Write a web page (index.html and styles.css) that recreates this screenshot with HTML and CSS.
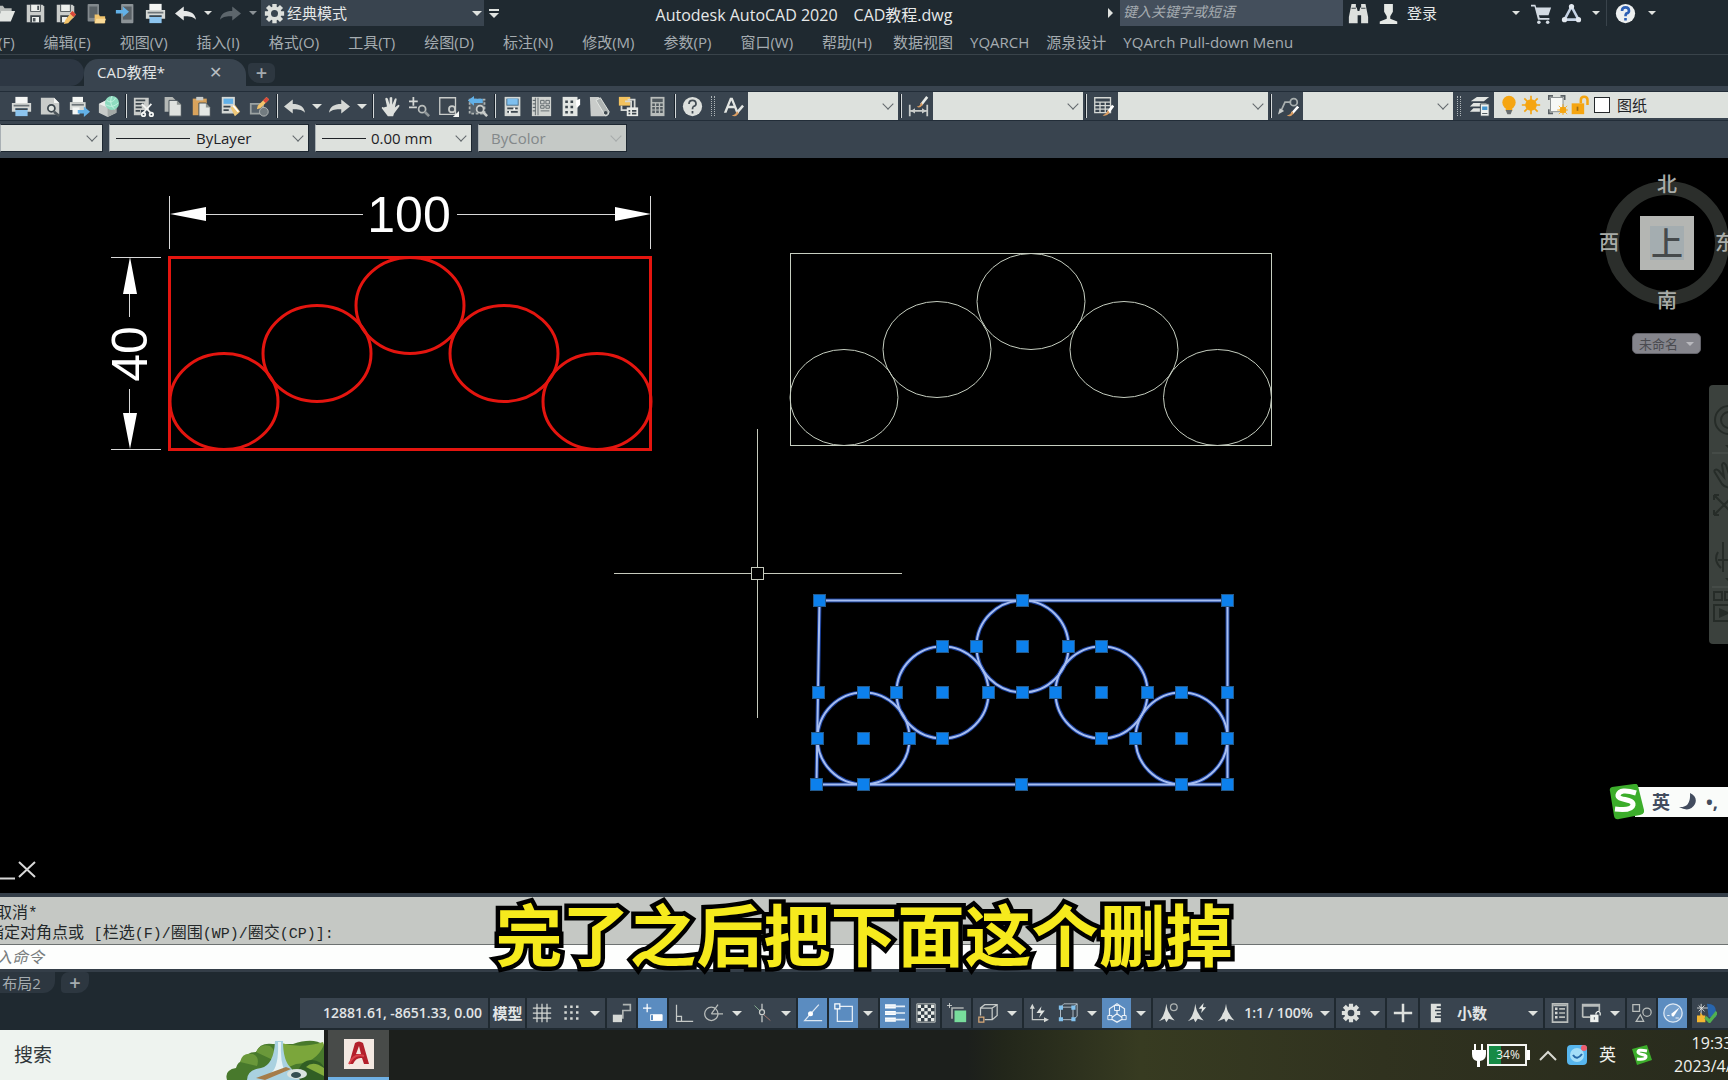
FILE: index.html
```html
<!DOCTYPE html>
<html lang="zh-CN">
<head>
<meta charset="utf-8">
<title>Autodesk AutoCAD 2020 - CAD教程.dwg</title>
<link rel="stylesheet" href="styles.css">
</head>
<body>
<svg class="sprite" aria-hidden="true">
  <symbol id="folder" viewBox="0 0 24 24"><path d="M1 3h8l2 3h8v3H7L3 20H1z" fill="#b9bdbb"/><path d="M7 9h16l-5 12H2z" fill="#e3e6e3"/></symbol>
  <symbol id="save" viewBox="0 0 24 24"><path d="M2 2h18l2 2v18H2z" fill="#c9ccca"/><path d="M6 2h12v8H6zM6 14h12v8H6z" fill="#3b4348"/><path d="M7 2h10v7H7zM8 16h8v6H8z" fill="#edf0ed"/><path d="M14 3h2v5h-2zM9 17h3v4H9z" fill="#4b5358"/></symbol>
  <symbol id="saveas" viewBox="0 0 24 24"><path d="M2 2h18l2 2v12l-8 6H2z" fill="#c9ccca"/><path d="M6 2h12v8H6zM6 14h10v8H6z" fill="#3b4348"/><path d="M7 2h10v7H7zM8 16h6v6H8z" fill="#edf0ed"/><path d="M20 9l4 4-9 10-5 1 2-5z" fill="#f3c36a"/><path d="M20 9l4 4-3 3-4-4z" fill="#d9483b"/></symbol>
  <symbol id="openweb" viewBox="0 0 24 24"><rect x="3" y="1" width="13" height="20" rx="1" fill="#82898d"/><path d="M5 4h9v13H5z" fill="#596166"/><path d="M11 13h5l1 2h6v8H11z" fill="#f0c36c"/><path d="M13 18h11l-2 5H11z" fill="#fadb97"/></symbol>
  <symbol id="saveweb" viewBox="0 0 24 24"><rect x="7" y="1" width="14" height="22" rx="1" fill="#8c9397"/><path d="M9 4h10v15H9z" fill="#596166"/><path d="M1 8h8V4l7 6-7 6v-4H1z" fill="#62b1e8"/></symbol>
  <symbol id="print" viewBox="0 0 24 24"><path d="M5 1h14v7H5z" fill="#f4f6f4"/><path d="M1 8h22v10H1z" fill="#d5d8d5"/><path d="M3 10h18v2H3z" fill="#6c7478"/><path d="M5 14h14v9H5z" fill="#8cc4ee"/><path d="M5 14h14v2H5z" fill="#3c464d"/></symbol>
  <symbol id="preview" viewBox="0 0 24 24"><path d="M1 2h15l6 6v13H1z" fill="#c9ccca"/><path d="M16 2v6h6z" fill="#f4f6f4"/><circle cx="13" cy="14" r="4" fill="#dfe3df" stroke="#3c464d" stroke-width="2"/><path d="M16 18l6 5" stroke="#4c555b" stroke-width="3"/></symbol>
  <symbol id="publish" viewBox="0 0 24 24"><path d="M4 1h12v6H4z" fill="#f4f6f4"/><path d="M1 7h18v9H1z" fill="#d5d8d5"/><path d="M3 9h14v2H3z" fill="#6c7478"/><path d="M4 13h8v8H4z" fill="#f4f6f4"/><path d="M10 16h7v-4l7 6-7 6v-4h-7z" fill="#62b1e8"/></symbol>
  <symbol id="dwf" viewBox="0 0 24 24"><path d="M1 9l10-5 10 5v10l-10 5-10-5z" fill="#c7cac8"/><path d="M11 13l10-4v10l-10 5z" fill="#a3a8a6"/><path d="M1 9l10-5 6 3-6 6z" fill="#eceeec"/><circle cx="16" cy="8" r="8" fill="#8edcc0"/><path d="M10 5c5 4 9 0 10-3M9 10c5 3 10 2 14-2M16 0c-3 6-1 12 3 15" fill="none" stroke="#c8f3e4"/></symbol>
  <symbol id="cut" viewBox="0 0 24 24"><path d="M1 2h17v14H9v6H1z" fill="#c9ccca"/><path d="M3 5h11M3 9h9M3 13h7M3 17h5" stroke="#3c464d" stroke-width="2"/><path d="M10 9l11 11M21 9L11 20" stroke="#f4f6f4" stroke-width="2"/><circle cx="12" cy="21" r="2" fill="none" stroke="#f4f6f4" stroke-width="2"/><circle cx="21" cy="21" r="2" fill="none" stroke="#f4f6f4" stroke-width="2"/></symbol>
  <symbol id="copy" viewBox="0 0 24 24"><path d="M3 1h9l4 4v13H3z" fill="#b4b8b6"/><path d="M8 5h9l5 5v13H8z" fill="#dfe2df" stroke="#3c464d"/><path d="M17 5v5h5z" fill="#8e9492"/></symbol>
  <symbol id="paste" viewBox="0 0 24 24"><path d="M2 3h16v19H2z" fill="#d9a35c"/><path d="M6 1h8v4H6z" fill="#c9ccca"/><path d="M9 8h8l5 5v10H9z" fill="#e5e8e5" stroke="#3c464d"/><path d="M17 8v5h5z" fill="#8e9492"/></symbol>
  <symbol id="match" viewBox="0 0 24 24"><path d="M2 1h15v19H2z" fill="#d5d8d5"/><path d="M4 3h11v6H4z" fill="#62b1e8"/><path d="M4 12h8M4 16h6" stroke="#3c464d" stroke-width="2"/><path d="M12 13l5-3 6 8-6 5z" fill="#f0c878"/><path d="M15 11l6 7" stroke="#fff" stroke-width="2"/></symbol>
  <symbol id="block" viewBox="0 0 24 24"><path d="M2 9h14v11H2z" fill="#56616a" stroke="#9ba2a2" stroke-width="2"/><circle cx="17" cy="18" r="5" fill="#727b80" stroke="#b8bcba"/><path d="M20 1l3 3-10 10-4 1 1-4z" fill="#f3c36a"/><path d="M20 1l3 3-4 4-3-3z" fill="#d9483b"/></symbol>
  <symbol id="undo" viewBox="0 0 24 24"><path d="M0 12L10 4v5c8 0 13 3 14 10-4-4-8-4-14-4v5z" fill="currentColor"/></symbol>
  <symbol id="redo" viewBox="0 0 24 24"><path d="M24 12L14 4v5C6 9 1 12 0 19c4-4 8-4 14-4v5z" fill="currentColor"/></symbol>
  <symbol id="hand" viewBox="0 0 24 24"><path d="M8 12L6 3q1-2 3 0l2 7V2q2-2 3 0v8l3-7q2-1 2 1l-2 9 4-3q2 0 1 2l-6 8-1 3H9l-7-9q0-2 2-1z" fill="#dde0dd"/></symbol>
  <symbol id="zoompm" viewBox="0 0 24 24"><path d="M5 1v10M0 6h10M0 13h9" stroke="#d5d8d5" stroke-width="2"/><circle cx="15" cy="15" r="4" fill="none" stroke="#b9bdbb" stroke-width="2"/><path d="M18 18l5 5" stroke="#909799" stroke-width="3"/></symbol>
  <symbol id="zoomwin" viewBox="0 0 24 24"><path d="M2 2h18v19H2z" fill="#3c4650" stroke="#c9ccca" stroke-width="1.5"/><circle cx="16" cy="15" r="3.500" fill="#48525b" stroke="#c9ccca" stroke-width="2"/><path d="M24 17v7h-7z" fill="#f4f6f4"/></symbol>
  <symbol id="zoomprev" viewBox="0 0 24 24"><path d="M3 4h17v16H3z" fill="#59636b" stroke="#aeb3b2" stroke-dasharray="3 2" stroke-width="2"/><path d="M1 5l7-5v3h10v5H8v3z" fill="#62b1e8"/><circle cx="15" cy="15" r="4" fill="#414b54" stroke="#c9ccca" stroke-width="2"/><path d="M18 18l5 5" stroke="#c9ccca" stroke-width="3"/></symbol>
  <symbol id="props" viewBox="0 0 24 24"><path d="M3 1h18v22H3z" fill="#d5d8d5"/><path d="M5 3h14v8H5z" fill="#3c6482"/><path d="M6 3h12v7H6z" fill="#7ebfee"/><path d="M6 14h12M6 18h12" stroke="#3c464d" stroke-width="2"/><path d="M14 13v3M9 17v3" stroke="#fff" stroke-width="2"/></symbol>
  <symbol id="design" viewBox="0 0 24 24"><path d="M1 1h22v22H1z" fill="#cfd2cf"/><path d="M5 2v20M8 2v20" stroke="#5a6468"/><path d="M2 5h3M2 9h3M2 13h3M2 17h3" stroke="#3c464d"/><path d="M11 5h4v4h-4zM17 5h4v4h-4zM11 11h4v3h-4zM17 11h4v3h-4zM11 17h10" fill="none" stroke="#5a6468"/></symbol>
  <symbol id="palettes" viewBox="0 0 24 24"><path d="M3 1h17v22H3z" fill="#e2e5e2"/><path d="M6 5h3v3H6zM12 5h3v3h-3zM6 11h3v3H6zM12 11h3v3h-3zM6 17h3v3H6zM12 17h3v3h-3z" fill="#3c464d"/><path d="M18 5l5-2v7l-4 4z" fill="#fff"/></symbol>
  <symbol id="sheets" viewBox="0 0 24 24"><path d="M1 1h10l12 18-5 4H2z" fill="#c9ccca"/><path d="M8 5l5-3 10 16q0 4-4 5L8 5" fill="#aeb3b2" stroke="#e8ebe8"/><circle cx="19" cy="19" r="2" fill="#3c464d"/></symbol>
  <symbol id="markup" viewBox="0 0 24 24"><path d="M1 1h13v10H1z" fill="#f2c25e"/><path d="M8 6h7v10H4v-5" fill="none" stroke="#d5d8d5" stroke-width="2"/><path d="M11 4h8v11" fill="none" stroke="#d5d8d5" stroke-width="2"/><path d="M10 13h13v10H10z" fill="#e8ebe8"/><path d="M12 17h2M16 17h5M12 20h2M16 20h5" stroke="#3c464d" stroke-width="2"/></symbol>
  <symbol id="calc" viewBox="0 0 24 24"><path d="M4 1h16v22H4z" fill="#b9bdbb"/><path d="M6 3h12v4H6z" fill="#4f585e"/><path d="M6 10h12M6 14h12M6 18h12" stroke="#4f585e" stroke-width="3" stroke-dasharray="3 1.500"/></symbol>
  <symbol id="help" viewBox="0 0 24 24"><circle cx="12" cy="12" r="11" fill="#dde0dd"/><path d="M8 9q0-4 4-4t4 4q0 2-3 3-1 1-1 3M12 17v3" fill="none" stroke="#434c54" stroke-width="2"/></symbol>
  <symbol id="bluehelp" viewBox="0 0 24 24"><circle cx="12" cy="12" r="11" fill="#edf0f0"/><path d="M8 9q0-4 4-4t4 4q0 2-3 3-1 1-1 3M12 17v3" fill="none" stroke="#2c5fb4" stroke-width="3"/></symbol>
  <symbol id="textstyle" viewBox="0 0 24 24"><path d="M1 19L8 2h3l7 17h-3l-2-5H6l-2 5zM7 11h5L9.500 5z" fill="#e2e5e2"/><path d="M23 11l-7 8" stroke="#e2e5e2" stroke-width="3"/><path d="M16 17l2 3q-4 5-8 2 4 0 6-5" fill="#d99c61"/></symbol>
  <symbol id="dimstyle" viewBox="0 0 24 24"><path d="M2 10v13M22 10v13M3 17h18" stroke="#c9ccca" stroke-width="2"/><path d="M3 17l5-3v6zM21 17l-5-3v6z" fill="#c9ccca"/><path d="M22 1l-7 9" stroke="#e8ebe8" stroke-width="3"/><path d="M15 7l2 3q-4 5-7 2 4 0 5-5" fill="#d99c61"/></symbol>
  <symbol id="tablestyle" viewBox="0 0 24 24"><path d="M2 2h18v17H2zM2 7h18M2 11h18M2 15h18M8 7v12M14 7v12" fill="none" stroke="#d5d8d5" stroke-width="1.500"/><path d="M23 11l-6 8" stroke="#fff" stroke-width="3"/><path d="M17 16l2 3q-4 5-8 3 4-1 6-6" fill="#d99c61"/></symbol>
  <symbol id="leader" viewBox="0 0 24 24"><path d="M3 18L8 7h7" fill="none" stroke="#a9afaf" stroke-width="2"/><path d="M0 21l2-7 5 3z" fill="#c9ccca"/><circle cx="18" cy="7" r="4" fill="none" stroke="#a9afaf" stroke-width="2"/><path d="M23 12l-7 8" stroke="#fff" stroke-width="3"/><path d="M16 17l2 3q-4 5-8 2 4 0 6-5" fill="#d99c61"/></symbol>
  <symbol id="layers" viewBox="0 0 24 24"><path d="M2 6l7-5h14l-6 5zM1 12l4-4h15v4zM1 18l4-4h12v4z" fill="#e2e5e2"/><path d="M13 9h10v14H13z" fill="#eef1ee" stroke="#3c464d"/><path d="M15 12h6v4h-6z" fill="#4596cf"/><path d="M15 20h6" stroke="#3c464d"/></symbol>
  <symbol id="bulb" viewBox="0 0 24 24"><circle cx="12" cy="9" r="8" fill="#f5a511"/><path d="M8 14h8v5H8z" fill="#f5a511"/><path d="M8 18h8l-2 5h-4z" fill="#686d6e"/></symbol>
  <symbol id="sun" viewBox="0 0 24 24"><circle cx="12" cy="12" r="7" fill="#f5a511"/><path d="M12 1v22M1 12h22M4 4l16 16M20 4L4 20" stroke="#f5a511" stroke-width="2"/></symbol>
  <symbol id="vpfreeze" viewBox="0 0 24 24"><path d="M3 3h15v17H3z" fill="#f6f8f6" stroke="#777e80"/><path d="M1 6V1h5M15 1h5v5M1 17v5h5" fill="none" stroke="#596064" stroke-width="2"/><circle cx="18" cy="18" r="4" fill="#f5a511"/><path d="M18 11v13M11 18h13M13 13l10 10M23 13L13 23" stroke="#f5a511"/></symbol>
  <symbol id="unlock" viewBox="0 0 24 24"><path d="M2 10h15v13H2z" fill="#f5a511"/><path d="M13 10V6q0-4 4-4t4 4v6" fill="none" stroke="#f5a511" stroke-width="3"/><path d="M9 14v5" stroke="#9c6a14" stroke-width="2"/></symbol>
  <symbol id="gear" viewBox="0 0 24 24"><g stroke="#dde0dd" stroke-width="5"><path d="M12 1v22M1 12h22M4 4l16 16M20 4L4 20"/></g><circle cx="12" cy="12" r="8" fill="#dde0dd"/><circle cx="12" cy="12" r="4" fill="#39444f"/></symbol>
  <symbol id="binoc" viewBox="0 0 24 24"><path d="M4 1h5v4h1l1 4h2l1-4h1V1h5l3 15v7h-8v-9h-4v9H1v-7z" fill="#dde0dd"/><path d="M4 6h5M15 6h5" stroke="#283239"/></symbol>
  <symbol id="user" viewBox="0 0 24 24"><path d="M7 1h10v9l-3 5v3l8 3v3H2v-3l8-3v-3l-3-5z" fill="#e5e8e5"/></symbol>
  <symbol id="cart" viewBox="0 0 24 24"><path d="M0 2h5l1 3h17l-3 9H9l1 3h11v2H8L4 4H0z" fill="#d3dbe3"/><circle cx="9" cy="22" r="2" fill="#d3dbe3"/><circle cx="19" cy="22" r="2" fill="#d3dbe3"/></symbol>
  <symbol id="a360" viewBox="0 0 24 24"><path d="M12 4L4 19h16z" fill="none" stroke="#c5d2e4" stroke-width="3"/><circle cx="12" cy="4" r="3" fill="#e2e8ef"/><circle cx="4" cy="19" r="3" fill="#e2e8ef"/><circle cx="20" cy="19" r="3" fill="#e2e8ef"/></symbol>
  <symbol id="grid" viewBox="0 0 24 24"><path d="M6 1v22M12 1v22M18 1v22M1 6h22M1 12h22M1 18h22" stroke="#d5d8d5" stroke-width="1.500"/></symbol>
  <symbol id="snap" viewBox="0 0 24 24"><path d="M4 3h3v3H4zM11 3h3v3h-3zM18 3h3v3h-3zM4 10h3v3H4zM11 10h3v3h-3zM18 10h3v3h-3zM4 17h3v3H4zM11 17h3v3h-3zM18 17h3v3h-3z" fill="#d5d8d5"/></symbol>
  <symbol id="infer" viewBox="0 0 24 24"><path d="M1 14h11v9H1z" fill="#d5d8d5"/><path d="M13 2h9v7h-9v10" fill="none" stroke="#aeb3b2" stroke-width="2"/></symbol>
  <symbol id="dyn" viewBox="0 0 24 24"><path d="M5 1v10M0 6h10" stroke="#fff" stroke-width="1.500"/><path d="M9 14h14v7H9z" fill="none" stroke="#fff"/><path d="M12 14h11v7H12z" fill="#fff"/></symbol>
  <symbol id="ortho" viewBox="0 0 24 24"><path d="M3 2v20h20M3 16h6v6" fill="none" stroke="#c5c9c7" stroke-width="1.500"/></symbol>
  <symbol id="polar" viewBox="0 0 24 24"><circle cx="10" cy="13" r="8" fill="none" stroke="#b9bdbb" stroke-width="1.500"/><path d="M10 13L18 2M10 13h14" fill="none" stroke="#b9bdbb" stroke-width="1.500"/></symbol>
  <symbol id="iso" viewBox="0 0 24 24"><path d="M3 3l7 7" stroke="#8fbc96"/><path d="M14 14l8 7" stroke="#b88274"/><path d="M12 1v7M12 15v8" stroke="#c9ccca" stroke-width="1.500"/><circle cx="12" cy="11" r="3" fill="none" stroke="#c9ccca" stroke-width="1.500"/></symbol>
  <symbol id="otrack" viewBox="0 0 24 24"><path d="M19 2L2 21h21" fill="none" stroke="#dce7f2" stroke-width="1.500"/><circle cx="9" cy="13" r="3" fill="#fff"/></symbol>
  <symbol id="osnap" viewBox="0 0 24 24"><path d="M4 4h18v18H4z" fill="none" stroke="#e8eff6" stroke-width="1.500"/><path d="M1 1h6v6H1z" fill="#5b8cc0" stroke="#fff" stroke-width="1.500"/></symbol>
  <symbol id="lwt" viewBox="0 0 24 24"><path d="M0 4h13M0 12h13M0 20h13" stroke="#fff" stroke-width="5"/><path d="M0 4h24M0 12h24M0 20h24" stroke="#e5edf5" stroke-width="2"/></symbol>
  <symbol id="transp" viewBox="0 0 24 24"><path d="M1 1h22v22H1z" fill="#333e47" stroke="#d5d8d5"/><path d="M2 4h20M2 12h20M2 20h20" stroke="#e8ebe8" stroke-width="4" stroke-dasharray="4"/><path d="M6 8h16M6 16h16" stroke="#e8ebe8" stroke-width="4" stroke-dasharray="4"/></symbol>
  <symbol id="cycle" viewBox="0 0 24 24"><path d="M3 0v6M0 3h6" stroke="#d5d8d5"/><path d="M6 19V6h14" fill="none" stroke="#aeb3b2" stroke-width="2"/><path d="M9 9h14v14H9z" fill="#78dd9c"/></symbol>
  <symbol id="osnap3d" viewBox="0 0 24 24"><path d="M3 15V6h14v14H8M3 6l5-4h15v13l-6 5M17 6l6-4" fill="none" stroke="#c5c9c7" stroke-width="1.500"/><path d="M1 17h6v6H1z" fill="#39444f" stroke="#d9a978" stroke-width="1.500"/></symbol>
  <symbol id="ducs" viewBox="0 0 24 24"><path d="M4 4v16h17" fill="none" stroke="#c5c9c7" stroke-width="1.500"/><path d="M1 7l3-6 3 6zM18 17l6 3-6 3z" fill="#d5d8d5"/><path d="M15 4l-6 8h5l-2 6 7-9h-5z" fill="#e2e5e2"/></symbol>
  <symbol id="filter" viewBox="0 0 24 24"><path d="M3 5h15v15H3zM3 5l4-4h16v15l-5 4M18 5l5-4" fill="none" stroke="#c5d0d8"/><path d="M1 3h5v5H1zM16 3h5v5h-5zM1 17h5v5H1zM16 17h5v5h-5z" fill="#82c1ee"/></symbol>
  <symbol id="gizmo" viewBox="0 0 24 24"><path d="M12 1l9 6v11l-9 5-9-5V7zM12 5v8M12 13l-7 5M12 13l7 5" fill="none" stroke="#e8eff6" stroke-width="1.500"/><path d="M9 3h6v6H9zM1 15h5v5H1zM18 15h5v5h-5z" fill="#5b8cc0" stroke="#fff"/></symbol>
  <symbol id="annovis" viewBox="0 0 24 24"><path d="M10 1q1 8 4 12 2 4 6 8l-7-2-3 4-2-4-7 3q5-5 6-9 2-4 3-12z" fill="#dde0dd"/><circle cx="19" cy="5" r="4" fill="#39444f" stroke="#aeb3b2" stroke-width="1.500"/></symbol>
  <symbol id="annoauto" viewBox="0 0 24 24"><path d="M10 1q1 8 4 12 2 4 6 8l-7-2-3 4-2-4-7 3q5-5 6-9 2-4 3-12z" fill="#dde0dd"/><path d="M20 0l-6 7h4l-1 5 6-7h-4z" fill="#e8ebe8"/></symbol>
  <symbol id="anno" viewBox="0 0 24 24"><path d="M12 1q1 8 4 12 2 4 6 8l-7-2-3 4-2-4-8 3q5-5 6-9 3-4 4-12z" fill="#dde0dd"/></symbol>
  <symbol id="plus" viewBox="0 0 24 24"><path d="M12 1v22M1 12h22" stroke="#dde0dd" stroke-width="3"/></symbol>
  <symbol id="ruler" viewBox="0 0 24 24"><path d="M7 1h12v3h-5v2h5v2h-7v2h7v2h-5v2h5v2h-7v2h7v5H7z" fill="#dde0dd"/></symbol>
  <symbol id="quick" viewBox="0 0 24 24"><path d="M3 1h18v22H3z" fill="none" stroke="#b9bdbb" stroke-width="2"/><path d="M6 7h3M6 12h3M6 17h3" stroke="#d5d8d5" stroke-width="3"/><path d="M11 7h7M11 12h7M11 17h7M4 3h16" stroke="#b9bdbb" stroke-width="2"/></symbol>
  <symbol id="lockui" viewBox="0 0 24 24"><path d="M2 17V2h20v8M2 17h9" fill="none" stroke="#b9bdbb" stroke-width="2"/><path d="M2 3h20" stroke="#b9bdbb" stroke-width="3"/><path d="M11 14h10v9H11z" fill="#eef1ee"/><path d="M18 14v-2q3-4 5 0v3" fill="none" stroke="#eef1ee" stroke-width="1.500"/><path d="M16 17v3" stroke="#39444f"/></symbol>
  <symbol id="isolate" viewBox="0 0 24 24"><path d="M1 2h8v8H1zM5 22h9l-4-8z" fill="none" stroke="#b9bdbb" stroke-width="1.500"/><circle cx="18" cy="11" r="5" fill="none" stroke="#b9bdbb" stroke-width="1.500"/></symbol>
  <symbol id="perf" viewBox="0 0 24 24"><circle cx="12" cy="12" r="11" fill="#75a0cd" stroke="#dfe9f3" stroke-width="1.500"/><path d="M10 13L20 5l-7 11q-3 1-3-3z" fill="#fff"/><path d="M5 15h3M15 18h4" stroke="#fff"/></symbol>
  <symbol id="standards" viewBox="0 0 24 24"><path d="M12 1q11 0 11 10v6h-9z" fill="#2865ad"/><path d="M5 1v12M0 6h13M2 3l7 7M9 3l-7 7" stroke="#e8ebe8"/><path d="M0 15h4v-4l3 4h3v8H0z" fill="#f3b631"/><path d="M10 17l5 5 9-11" fill="none" stroke="#51b150" stroke-width="4"/></symbol>
</svg>

<header class="titlebar">
  <div class="quick">
    <button aria-label="打开"><svg><use href="#folder"/></svg></button>
    <button aria-label="保存"><svg><use href="#save"/></svg></button>
    <button aria-label="另存为"><svg><use href="#saveas"/></svg></button>
    <button aria-label="从 Web 打开"><svg><use href="#openweb"/></svg></button>
    <button aria-label="保存到 Web"><svg><use href="#saveweb"/></svg></button>
    <button aria-label="打印"><svg><use href="#print"/></svg></button>
    <button aria-label="放弃"><svg><use href="#undo"/></svg></button>
    <button class="drop" aria-label="放弃列表"></button>
    <button class="dim" aria-label="重做"><svg><use href="#redo"/></svg></button>
    <button class="drop dim" aria-label="重做列表"></button>
  </div>
  <div class="workspace">
    <svg><use href="#gear"/></svg>
    <select aria-label="工作空间"><option>经典模式</option></select>
  </div>
  <button class="custom" aria-label="自定义快速访问工具栏"></button>
  <h1><span>Autodesk AutoCAD 2020</span><span>CAD教程.dwg</span></h1>
  <div class="infocenter">
    <button class="expand" aria-label="展开搜索"></button>
    <input type="search" placeholder="键入关键字或短语" aria-label="搜索帮助">
    <button aria-label="查找"><svg><use href="#binoc"/></svg></button>
    <button class="login"><svg><use href="#user"/></svg>登录</button>
    <button class="drop account" aria-label="登录选项"></button>
    <button aria-label="应用商店"><svg><use href="#cart"/></svg></button>
    <button aria-label="连接"><svg><use href="#a360"/></svg></button>
    <button class="drop narrow" aria-label="连接选项"></button>
    <button class="ruled" aria-label="帮助"><svg><use href="#bluehelp"/></svg></button>
    <button class="drop" aria-label="帮助选项"></button>
  </div>
</header>

<nav class="menubar">
  <a href="#">(F)</a><a href="#">编辑(E)</a><a href="#">视图(V)</a><a href="#">插入(I)</a><a href="#">格式(O)</a><a href="#">工具(T)</a><a href="#">绘图(D)</a><a href="#">标注(N)</a><a href="#">修改(M)</a><a href="#">参数(P)</a><a href="#">窗口(W)</a><a href="#">帮助(H)</a>
  <div class="plugins"><a href="#">数据视图</a><a href="#">YQARCH</a><a href="#">源泉设计</a><a href="#">YQArch Pull-down Menu</a></div>
</nav>

<div class="filetabs">
  <button class="tab start" aria-label="开始"></button>
  <div class="tab active"><span>CAD教程*</span><button aria-label="关闭">✕</button></div>
  <button class="tab new" aria-label="新图形">+</button>
</div>

<div class="toolbars">
  <div class="toolbar">
    <button aria-label="打印"><svg><use href="#print"/></svg></button>
    <button aria-label="打印预览"><svg><use href="#preview"/></svg></button>
    <button aria-label="发布"><svg><use href="#publish"/></svg></button>
    <button aria-label="三维 DWF"><svg><use href="#dwf"/></svg></button>
    <i class="sep"></i>
    <button aria-label="剪切"><svg><use href="#cut"/></svg></button>
    <button aria-label="复制"><svg><use href="#copy"/></svg></button>
    <button aria-label="粘贴"><svg><use href="#paste"/></svg></button>
    <button aria-label="特性匹配"><svg><use href="#match"/></svg></button>
    <button aria-label="块编辑器"><svg><use href="#block"/></svg></button>
    <i class="sep"></i>
    <button aria-label="放弃"><svg><use href="#undo"/></svg></button>
    <button class="drop" aria-label="放弃列表"></button>
    <button aria-label="重做"><svg><use href="#redo"/></svg></button>
    <button class="drop" aria-label="重做列表"></button>
    <i class="sep"></i>
    <button aria-label="平移"><svg><use href="#hand"/></svg></button>
    <button aria-label="实时缩放"><svg><use href="#zoompm"/></svg></button>
    <button aria-label="窗口缩放"><svg><use href="#zoomwin"/></svg></button>
    <button aria-label="缩放上一个"><svg><use href="#zoomprev"/></svg></button>
    <i class="sep"></i>
    <button aria-label="特性"><svg><use href="#props"/></svg></button>
    <button aria-label="设计中心"><svg><use href="#design"/></svg></button>
    <button aria-label="工具选项板"><svg><use href="#palettes"/></svg></button>
    <button aria-label="图纸集管理器"><svg><use href="#sheets"/></svg></button>
    <button aria-label="标记集管理器"><svg><use href="#markup"/></svg></button>
    <button aria-label="快速计算器"><svg><use href="#calc"/></svg></button>
    <i class="sep"></i>
    <button aria-label="帮助"><svg><use href="#help"/></svg></button>
    <i class="grip"></i>
    <button aria-label="文字样式"><svg><use href="#textstyle"/></svg></button>
    <div class="combo style"><select aria-label="文字样式控制"><option></option></select></div>
    <i class="sep"></i>
    <button aria-label="标注样式"><svg><use href="#dimstyle"/></svg></button>
    <div class="combo style"><select aria-label="标注样式控制"><option></option></select></div>
    <i class="sep"></i>
    <button aria-label="表格样式"><svg><use href="#tablestyle"/></svg></button>
    <div class="combo style"><select aria-label="表格样式控制"><option></option></select></div>
    <i class="sep"></i>
    <button aria-label="多重引线样式"><svg><use href="#leader"/></svg></button>
    <div class="combo style"><select aria-label="引线样式控制"><option></option></select></div>
    <i class="grip"></i>
    <button aria-label="图层特性管理器"><svg><use href="#layers"/></svg></button>
    <div class="layer">
      <svg><use href="#bulb"/></svg><svg><use href="#sun"/></svg><svg class="wide"><use href="#vpfreeze"/></svg><svg><use href="#unlock"/></svg><i class="swatch"></i>
      <select aria-label="图层"><option>图纸</option></select>
    </div>
  </div>
  <div class="properties">
    <div class="combo color"><select aria-label="颜色"><option></option></select></div>
    <div class="combo linetype"><select aria-label="线型"><option>ByLayer</option></select></div>
    <div class="combo lineweight"><select aria-label="线宽"><option>0.00 mm</option></select></div>
    <div class="combo plotstyle"><select aria-label="打印样式" disabled><option>ByColor</option></select></div>
  </div>
</div>

<main class="canvas">
  <svg class="drawing" role="img" aria-label="图形">
    <defs>
      <rect id="handle" class="handle" x="-6" y="-6" width="12" height="12"/>
      <g id="handles"><use href="#handle"/><use href="#handle" x="-46"/><use href="#handle" x="46"/><use href="#handle" y="-46"/><use href="#handle" y="46"/></g>
    </defs>
    <g transform="translate(0 -158)">
      <g class="dimension">
        <path d="M169.500 196v53M650.500 196v53M206 214.500h157M457 214.500h158M111 257.500h50M111 449.500h50M129.500 293v24M129.500 389v24"/>
        <path class="solid" d="M170 214l36-7v14zM651 214l-36-7v14zM130 257l-7 37h14zM130 449l-7-36h14z"/>
        <text x="409" y="232">100</text>
        <text transform="translate(147 354) rotate(-90)">40</text>
      </g>
      <g class="red">
        <rect x="169.500" y="257.500" width="481" height="192"/>
        <ellipse cx="224" cy="401.500" rx="54" ry="48"/><ellipse cx="317" cy="353.500" rx="54" ry="48"/><ellipse cx="410" cy="305.500" rx="54" ry="48"/><ellipse cx="504" cy="353.500" rx="54" ry="48"/><ellipse cx="597" cy="401.500" rx="54" ry="48"/>
      </g>
      <g class="plain">
        <rect x="790.5" y="253.5" width="481" height="192"/>
        <ellipse cx="844" cy="397.500" rx="54" ry="48"/><ellipse cx="937" cy="349.500" rx="54" ry="48"/><ellipse cx="1031" cy="301.500" rx="54" ry="48"/><ellipse cx="1124" cy="349.500" rx="54" ry="48"/><ellipse cx="1217.500" cy="397.500" rx="54" ry="48"/>
      </g>
      <g class="cursor"><path d="M757.5 429v138M757.5 579v139M614 573.5h138M763 573.5h139"/><rect x="751.5" y="567.5" width="12" height="12"/></g>
      <g>
        <g class="glow"><path d="M819.500 600.500H1227.500V784.500H816.500z"/><circle cx="863.500" cy="738.500" r="46"/><circle cx="942.500" cy="692.500" r="46"/><circle cx="1022.500" cy="646.500" r="46"/><circle cx="1101.500" cy="692.500" r="46"/><circle cx="1181.500" cy="738.500" r="46"/></g>
        <g class="picked"><path d="M819.500 600.500H1227.500V784.500H816.500z"/><circle cx="863.500" cy="738.500" r="46"/><circle cx="942.500" cy="692.500" r="46"/><circle cx="1022.500" cy="646.500" r="46"/><circle cx="1101.500" cy="692.500" r="46"/><circle cx="1181.500" cy="738.500" r="46"/></g>
        <use href="#handles" x="863.500" y="738.500"/><use href="#handles" x="942.500" y="692.500"/><use href="#handles" x="1022.500" y="646.500"/><use href="#handles" x="1101.500" y="692.500"/><use href="#handles" x="1181.500" y="738.500"/>
        <use href="#handle" x="819.500" y="600.500"/><use href="#handle" x="1227.500" y="600.500"/><use href="#handle" x="818.500" y="692.500"/><use href="#handle" x="1227.500" y="692.500"/><use href="#handle" x="816.500" y="784.500"/><use href="#handle" x="1021.500" y="784.500"/><use href="#handle" x="1227.500" y="784.500"/>
      </g>
      <g class="ucs"><path d="M0 878.500h15M19 862l16 15M35 862L19 877"/></g>
    </g>
  </svg>
  <div class="viewcube">
    <span class="north">北</span><span class="west">西</span><button>上</button><span class="east">东</span><span class="south">南</span>
  </div>
  <button class="ucsname">未命名</button>
  <div class="navbar">
    <svg viewBox="0 0 40 259"><g fill="none" stroke="#262c28" stroke-width="2"><circle cx="20" cy="35" r="14"/><circle cx="20" cy="35" r="8"/><path d="M5 86l8 13q5 6 14 2M5 86q2-3 5 0l5 6-2-12q1-4 4 0l3 9V76q3-2 4 0v12M5 110l20 20M5 130l20-20M5 110v5M5 110h5M5 130v-5M5 130h5M12 183q-8-8-3-16M9 175h18M14 157v30M5 207h8v8H5zM16 207h8v8h-8zM5 220h22v16H5z"/></g><path d="M10 223l11 5-11 5zM16 60h6l-3 3zM16 193h6l-3 3z" fill="#262c28"/><path d="M3 68h37M3 202h37" stroke="#505752"/></svg>
  </div>
  <div class="ime">
    <svg viewBox="0 0 36 36"><path d="M2 7q-1-3 2-4L26 0q3-1 4 2l6 24q1 4-4 5L11 35q-4 1-5-3z" fill="#3cad2b"/><path d="M28 9q-16-5-18 2c-1 6 16 3 15 10q-1 6-18 4" fill="none" stroke="#fff" stroke-width="5"/></svg>
    <span>英</span>
    <svg class="moon" viewBox="0 0 20 20"><path d="M12 1q8 4 5 11-5 9-16 3 12 1 11-14" fill="#424c5e"/></svg>
    <span class="punct">•,</span>
  </div>
</main>

<section class="command">
  <div class="history">
    <p class="cancel">取消*</p>
    <p class="prompt">指定对角点或 <span>[</span>栏选<span>(F)/</span>圈围<span>(WP)/</span>圈交<span>(CP)]:</span></p>
  </div>
  <input type="text" placeholder="入命令" aria-label="命令行">
  <div class="subtitle">完了之后把下面这个删掉</div>
</section>

<div class="layouts">
  <button class="layout">布局2</button>
  <button class="layout add" aria-label="新建布局">+</button>
</div>

<footer class="status">
  <div class="group coords">12881.61, -8651.33, 0.00</div>
  <div class="group"><button class="model">模型</button></div>
  <div class="group"><button aria-label="栅格"><svg><use href="#grid"/></svg></button><button aria-label="捕捉"><svg><use href="#snap"/></svg></button><button class="drop" aria-label="捕捉设置"></button></div>
  <div class="group"><button aria-label="推断约束"><svg><use href="#infer"/></svg></button></div>
  <div class="group"><button class="on" aria-label="动态输入"><svg><use href="#dyn"/></svg></button></div>
  <div class="group"><button aria-label="正交"><svg><use href="#ortho"/></svg></button><button aria-label="极轴追踪"><svg><use href="#polar"/></svg></button><button class="drop" aria-label="极轴设置"></button><button aria-label="等轴测草图"><svg><use href="#iso"/></svg></button><button class="drop" aria-label="等轴测设置"></button></div>
  <div class="group"><button class="on" aria-label="对象捕捉追踪"><svg><use href="#otrack"/></svg></button></div>
  <div class="group"><button class="on" aria-label="对象捕捉"><svg><use href="#osnap"/></svg></button><button class="drop" aria-label="对象捕捉设置"></button></div>
  <div class="group"><button class="on" aria-label="线宽"><svg><use href="#lwt"/></svg></button></div>
  <div class="group"><button aria-label="透明度"><svg><use href="#transp"/></svg></button></div>
  <div class="group"><button aria-label="选择循环"><svg><use href="#cycle"/></svg></button></div>
  <div class="group"><button aria-label="三维对象捕捉"><svg><use href="#osnap3d"/></svg></button><button class="drop" aria-label="三维对象捕捉设置"></button></div>
  <div class="group"><button aria-label="动态 UCS"><svg><use href="#ducs"/></svg></button><button aria-label="选择过滤"><svg><use href="#filter"/></svg></button><button class="drop" aria-label="过滤设置"></button><button class="on" aria-label="小控件"><svg><use href="#gizmo"/></svg></button><button class="drop" aria-label="小控件设置"></button></div>
  <div class="group"><button aria-label="注释可见性"><svg><use href="#annovis"/></svg></button><button aria-label="自动缩放"><svg><use href="#annoauto"/></svg></button><button aria-label="注释比例"><svg><use href="#anno"/></svg></button><button class="scale">1:1 / 100%</button></div>
  <div class="group"><button aria-label="切换工作空间"><svg><use href="#gear"/></svg></button><button class="drop" aria-label="工作空间列表"></button></div>
  <div class="group monitor"><button aria-label="注释监视器"><svg><use href="#plus"/></svg></button></div>
  <div class="group units"><svg><use href="#ruler"/></svg><select aria-label="单位"><option>小数</option></select></div>
  <div class="group"><button aria-label="快捷特性"><svg><use href="#quick"/></svg></button></div>
  <div class="group"><button aria-label="锁定用户界面"><svg><use href="#lockui"/></svg></button><button class="drop" aria-label="锁定列表"></button></div>
  <div class="group"><button aria-label="隔离对象"><svg><use href="#isolate"/></svg></button></div>
  <div class="group"><button class="on" aria-label="图形性能"><svg><use href="#perf"/></svg></button></div>
  <div class="group last"><button aria-label="图形标准"><svg><use href="#standards"/></svg></button></div>
</footer>

<div class="taskbar">
  <div class="search">
    <input type="text" placeholder="搜索" aria-label="搜索">
    <svg viewBox="0 0 99 40">
      <path d="M2 40q-3-10 9-12 2-8 9-7 0-9 11-9 4-10 17-8h20q20-7 31 1v35z" fill="#48792c"/>
      <path d="M56 3q20 6 42-1l1 3q-8 18-28 19l-12 5z" fill="#7ba63b"/><path d="M15 22q2-10 13-8 7 3 4 12M31 12q4-9 14-6 7 5 3 14" fill="#6a983a"/>
      <path d="M73 32q3-12 14-12 9 1 12 7v13H74z" fill="#315e24"/><path d="M81 27q7-7 18 1v8z" fill="#83ac3c"/>
      <path d="M50 1h8q0 20 8 27l9 12H22q0-10 14-12 13-3 14-27z" fill="#a9d1e0"/><path d="M53 2h3q-1 20 4 30l-14 1q8-6 7-31z" fill="#e7f3f5"/>
      <path d="M31 38l30-11 5 2-26 11z" fill="#a57c49"/><ellipse cx="72" cy="34" rx="10" ry="5" fill="#d9e3df"/><ellipse cx="71" cy="35" rx="5" ry="3" fill="#354f50"/>
    </svg>
  </div>
  <button class="app" aria-label="AutoCAD 2020"><svg viewBox="0 0 30 30"><path d="M0 0h30v30H0z" fill="#f3e8e1"/><path d="M5 25L11 4q4-3 8 0l6 21h-5l-2-6q-6-1-9 6z" fill="#b3202b"/><path d="M12 15l3-8 2 8z" fill="#f3e8e1"/><path d="M5 25q5-11 15-8" fill="none" stroke="#d9434a" stroke-width="2"/></svg></button>
  <div class="tray">
    <svg class="power" viewBox="0 0 60 27"><path d="M4 2h2v6h5V2h2v6h3v4q0 6-6 7v6H7v-6q-5-1-5-7V8h2z" fill="#fff"/><rect x="18" y="3" width="38" height="20" fill="none" stroke="#f4f5f2" stroke-width="2"/><path d="M19 4h12v18H19z" fill="#168a45"/><path d="M57 8h3v10h-3z" fill="#fff"/><text x="38" y="17">34%</text></svg>
    <svg class="chev" viewBox="0 0 18 12"><path d="M1 11l8-8 8 8" fill="none" stroke="#d9dad2" stroke-width="2"/></svg>
    <svg class="chat" viewBox="0 0 20 20"><rect width="20" height="20" rx="4" fill="#57b6ee"/><circle cx="10" cy="10" r="7" fill="#a4def7"/><path d="M6 10q4 6 9-1" fill="none" stroke="#2568a7" stroke-width="2"/><circle cx="17" cy="3" r="3" fill="#ef5d6c"/></svg>
    <span class="lang">英</span>
    <svg class="sogou" viewBox="0 0 20 20"><path d="M0 4l15-4 5 15-15 5z" fill="#3cad2b"/><path d="M15 6Q6 4 6 7c0 3 9 2 8 5q-1 3-9 2" fill="none" stroke="#fff" stroke-width="3"/></svg>
    <div class="clock"><span>19:33</span><span>2023/4/11</span></div>
  </div>
</div>
</body>
</html>
```
FILE: styles.css
```css
*, *::before, *::after { box-sizing: border-box; }

body {
  margin: 0;
  height: 100vh;
  display: flex;
  flex-direction: column;
  overflow: hidden;
  background: #1f2930;
  color: #c9cdcf;
  font: 15px/20px "Open Sans", "Noto Sans CJK SC", sans-serif;
}

button, select, input {
  font: inherit;
  color: inherit;
  border: 0;
  border-radius: 0;
  margin: 0;
  padding: 0;
  background: none;
}

select { appearance: none; }
a { color: inherit; text-decoration: none; }
svg { display: block; flex: none; }
.sprite { position: absolute; width: 0; height: 0; }

/* small filled arrow used by every split button */
.drop { display: flex; align-items: center; justify-content: center; }
.drop::after,
.workspace::after,
.scale::after,
.units::after {
  content: "";
  border: 5px solid transparent;
  border-top-color: #dfe2df;
  border-bottom: 0;
}
.dim { color: #5d666c; }
.drop.dim::after { border-top-color: #8b9296; }

/* title bar */
.titlebar { display: flex; height: 30px; flex: none; color: #e6e8e8; }
.titlebar svg { width: 21px; height: 21px; }
.titlebar button { display: flex; flex: none; align-items: center; justify-content: center; width: 30px; height: 26px; }
.titlebar .drop { width: 15px; }
.titlebar .drop::after { border-width: 4px; border-bottom: 0; }
.quick { display: flex; flex: none; width: 270px; margin-left: -10px; }
.quick .dim { color: #5d666c; }
.workspace { display: flex; flex: none; align-items: center; gap: 2px; width: 223px; height: 26px; margin-left: 1px; padding: 0 2px 0 3px; background: #39444f; }
.workspace select { flex: 1; }
.titlebar .custom { width: 20px; flex-direction: column; gap: 2px; }
.custom::before { content: ""; width: 10px; height: 2px; background: #dfe2df; }
.custom::after { content: ""; border: 5px solid transparent; border-top-color: #dfe2df; border-bottom: 0; }
.titlebar h1 { display: flex; gap: 16px; flex: 1; justify-content: center; margin: 0; padding: 5px 0 0 4px; font-size: 16px; font-weight: 400; white-space: nowrap; }
.infocenter { display: flex; flex: none; width: 628px; }
.titlebar .expand { width: 20px; }
.expand::after { content: ""; border: 5px solid transparent; border-left-color: #dfe2df; border-right: 0; }
.infocenter input { flex: none; width: 223px; height: 26px; padding: 0 3px 4px; background: #444f5c; font-style: italic; font-size: 14px; }
.infocenter input::placeholder { color: #a4abb0; }
.titlebar .login { width: 132px; gap: 8px; justify-content: flex-start; padding-left: 5px; }
.titlebar .account { width: 21px; }
.titlebar .narrow { width: 20px; }
.titlebar .ruled { width: 38px; border-left: 1px solid #39434b; }

/* menus */
.menubar { display: flex; gap: 29px; height: 25px; flex: none; padding-top: 2px; margin-left: -2px; border-bottom: 1px solid #39434a; color: #a5acb0; white-space: nowrap; }
.plugins { display: flex; gap: 17px; margin-left: -8px; }

/* drawing tabs */
.filetabs { display: flex; align-items: flex-end; height: 31px; flex: none; }
.tab { height: 27px; background: #39444f; color: #e2e5e6; }
.tab.start { width: 84px; height: 27px; background: #2d3743; border-radius: 0 14px 14px 0; }
.tab.active { display: flex; align-items: center; justify-content: space-between; width: 162px; padding: 0 24px 2px 13px; border-radius: 14px 16px 0 0; }
.tab.active button { font-size: 16px; color: #b9bfc2; }
.tab.new { width: 27px; height: 20px; margin: 0 0 3px 2px; background: #2d3740; border-radius: 4px 6px 6px 12px; font-size: 20px; font-weight: 600; line-height: 18px; color: #a4abae; }

/* toolbars */
.toolbars { flex: none; height: 72px; padding-top: 5px; background: #39444f; overflow: hidden; }
.toolbar { display: flex; height: 30px; padding-left: 7px; border: solid #222d38; border-width: 1px 0; color: #d5d8d5; }
.toolbar > button { flex: none; display: flex; align-items: center; justify-content: center; width: 29px; }
.toolbar > button svg { width: 21px; height: 21px; }
.toolbar > .drop { width: 16px; }
.sep { flex: none; width: 2px; margin: 2px 2px; background: #d5d9da; border-left: 1px solid #18212a; }
.grip { flex: none; width: 4px; margin: 4px 4px; border: dotted #aeb5b8; border-width: 0 1px; }
.combo { display: grid; flex: none; background: #dde1dd; color: #1e2226; }
.combo select { grid-area: 1 / 1; width: 100%; }
.combo::after { content: ""; grid-area: 1 / 1; justify-self: end; align-self: center; width: 8px; height: 8px; margin: 0 6px 4px 0; border: solid #62686c; border-width: 0 1px 1px 0; rotate: 45deg; pointer-events: none; }
.combo.style { width: 150px; }
.layer { display: flex; flex: 1; align-items: center; gap: 2px; height: 26px; padding-left: 5px; background: #dde1dd; color: #1e2226; }
.layer svg { width: 20px; height: 20px; }
.layer .wide { margin-left: 5px; }
.swatch { width: 16px; height: 16px; margin-left: 2px; border: 1px solid #24282b; background: #fff; }
.layer select { flex: 1; padding-left: 5px; }
.properties { display: flex; gap: 6px; height: 28px; margin-top: 3px; }
.properties .combo { height: 28px; border: 1px solid #1d2731; border-left-color: #a9b0b4; }
.properties .color { width: 103px; }
.properties .linetype { width: 200px; }
.properties .lineweight { width: 157px; }
.properties .plotstyle { width: 149px; background: #c5c9c6; color: #83888a; }
.properties .plotstyle select { padding-left: 12px; opacity: 1; }
.plotstyle::after { opacity: .3; }
.linetype::before, .lineweight::before { content: ""; grid-area: 1 / 1; align-self: center; width: 74px; height: 1px; margin-left: 6px; background: #1e2226; }
.lineweight::before { width: 44px; }
.linetype select { padding-left: 86px; }
.lineweight select { padding-left: 55px; }

/* model space */
.canvas { position: relative; flex: 1; min-height: 0; overflow: hidden; background: #000; }
.drawing { width: 100%; height: 100%; }
.drawing g { fill: none; }
.dimension { stroke: #d8d8d8; }
.dimension .solid { fill: #fff; stroke: none; }
.dimension text { fill: #fff; stroke: none; font: 50px "Liberation Sans", sans-serif; text-anchor: middle; }
.red { stroke: #e4150f; stroke-width: 3; }
.plain { stroke: #c6cec0; }
.cursor { stroke: #c6cabd; }
.glow { stroke: #173c96; stroke-width: 4; }
.picked { stroke: #a6bdf0; stroke-width: 2; }
.handle { fill: #0c80ec; stroke: #245a8c; }
.ucs { stroke: #d8d8d8; stroke-width: 2; }

.viewcube { position: absolute; top: 15px; right: -9px; display: grid; grid-template: 24px 92px 24px / 24px 92px 24px; place-items: center; color: #a9aca8; font-size: 20px; font-weight: 500; }
.viewcube::before { content: ""; grid-area: 1 / 1 / 4 / 4; width: 124px; height: 124px; border: 14px solid #2b2e2b; border-radius: 50%; }
.viewcube span, .viewcube button { z-index: 1; }
.north { grid-area: 1 / 2; }
.west { grid-area: 2 / 1; }
.east { grid-area: 2 / 3; }
.south { grid-area: 3 / 2; }
.viewcube button { grid-area: 2 / 2; width: 54px; height: 54px; border: 10px solid #b4b6b3; background: #a4adb0; color: #454a4c; font-size: 32px; line-height: 30px; }
.ucsname { position: absolute; top: 175px; right: 27px; display: flex; align-items: center; gap: 8px; width: 69px; height: 21px; padding: 0 6px; border: 1px solid #63636a; border-radius: 5px; background: #85858c; color: #4a4b50; font-size: 13px; white-space: nowrap; }
.ucsname::after { content: ""; border: 4px solid transparent; border-top-color: #b9b9be; border-bottom: 0; }
.navbar { position: absolute; top: 227px; right: -21px; width: 40px; height: 259px; border-radius: 4px; background: #3b413d; }
.ime { position: absolute; top: 629px; right: 0; display: flex; align-items: center; gap: 8px; width: 93px; height: 30px; background: #fafcfa; color: #424c5e; font-size: 18px; font-weight: 700; }
.ime svg { width: 36px; height: 36px; margin-left: -27px; }
.ime .moon { width: 20px; height: 20px; margin-left: 0; }

/* command window */
.command { position: relative; flex: none; height: 79px; padding-top: 4px; border-bottom: 3px solid #343e48; background: #343e48; }
.history { height: 48px; padding-top: 7px; background: #c5c8c4; border-bottom: 1px solid #6d7271; color: #24282a; font: 16px/20px "Liberation Mono", "Noto Sans CJK SC", monospace; white-space: nowrap; }
.history p { margin: 0 0 0 -12px; }
.history .cancel { margin-left: -4px; }
.history span { font-size: 15px; }
.command input { display: block; width: 100%; height: 24px; background: #fdfefd; font-size: 16px; font-style: italic; text-indent: -4px; }
.command input::placeholder { color: #787d7e; }
.subtitle { position: absolute; inset: 0; display: flex; align-items: center; justify-content: center; color: #f6ea1d; font: 700 67px/79px "Noto Sans CJK SC", sans-serif; white-space: nowrap; -webkit-text-stroke: 9px #000; paint-order: stroke fill; }

/* layout tabs */
.layouts { display: flex; gap: 6px; height: 26px; flex: none; }
.layout { width: 55px; height: 21px; padding: 0 12px 0 0; border-radius: 0 0 12px 0; background: #2d3740; color: #a5acb0; line-height: 20px; }
.layout.add { width: 28px; padding: 0; border-radius: 8px 4px 12px 4px; font-size: 20px; font-weight: 600; }

/* status bar */
.status { display: flex; justify-content: flex-end; gap: 2px; height: 32px; flex: none; padding-bottom: 2px; color: #e2e5e6; font-size: 14px; font-weight: 600; overflow: hidden; }
.group { display: flex; flex: none; align-items: center; background: #39444f; }
.group button { display: flex; align-items: center; justify-content: center; width: 29px; height: 30px; }
.group svg { width: 20px; height: 20px; }
.group .drop { width: 20px; }
.group .on { background: #5b8cc0; }
.coords { width: 188px; justify-content: flex-end; padding-right: 6px; }
.group .model { width: 35px; font-size: 15px; }
.group .scale { width: 94px; gap: 7px; white-space: nowrap; }
.monitor { padding: 0 1px; }
.units { width: 123px; gap: 12px; padding: 0 5px; font-size: 15px; }
.units select { flex: 1; }
.last { width: 36px; margin-left: 3px; }

/* desktop taskbar */
.taskbar { display: flex; justify-content: space-between; height: 50px; flex: none; background: linear-gradient(90deg, #1c1f1c 56%, #22261a 58%, #373b21 66%, #30321f 80%, #282b1d); overflow: hidden; }
.search { display: flex; align-items: flex-end; width: 324px; background: #eef3ef; color: #30363a; }
.search input { flex: 1; min-width: 0; height: 50px; padding-left: 14px; font-size: 19px; }
.search input::placeholder { color: #30363a; }
.search svg { width: 99px; height: 40px; }
.app { display: flex; align-items: center; justify-content: center; width: 61px; margin: 0 auto 0 4px; border-bottom: 3px solid #6fb0e4; background: #484b49; }
.app svg { width: 30px; height: 30px; }
.tray { display: flex; align-items: center; width: 258px; color: #f0f1ec; }
.power { width: 60px; height: 27px; }
.power text { fill: #f0f1ec; font-size: 12px; text-anchor: middle; }
.chev { width: 18px; height: 12px; margin-left: 9px; }
.chat { width: 20px; height: 20px; margin-left: 10px; }
.lang { margin-left: 12px; font-size: 17px; }
.sogou { width: 20px; height: 20px; margin-left: 16px; }
.clock { display: flex; flex-direction: column; align-items: center; width: 76px; flex: none; margin-left: 22px; font-size: 16px; line-height: 23px; }
```
